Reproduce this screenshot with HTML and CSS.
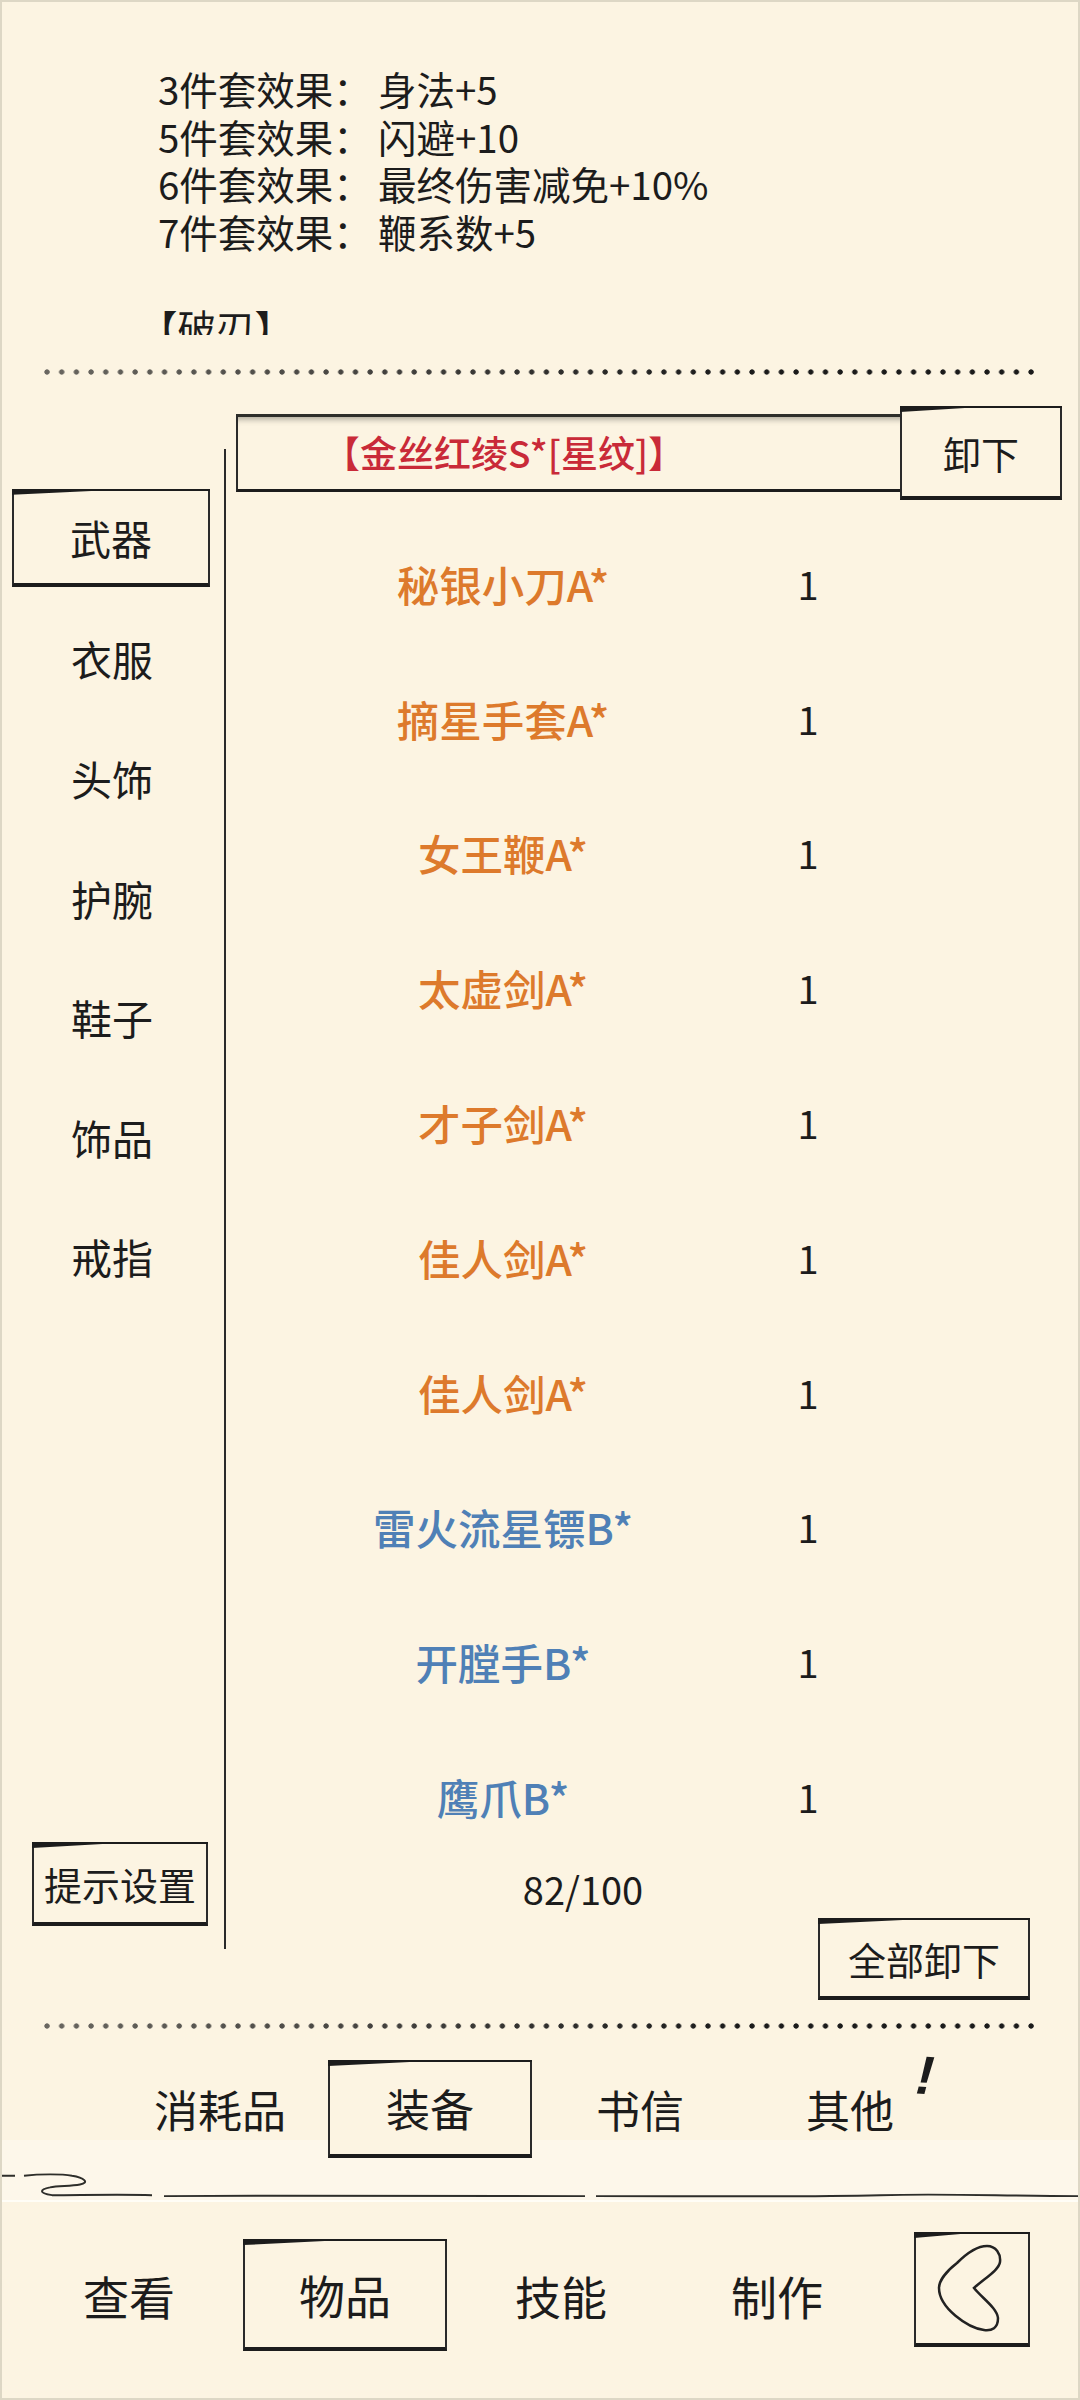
FILE: index.html
```html
<!DOCTYPE html>
<html lang="zh-CN">
<head>
    <meta charset="UTF-8">
    <meta name="viewport" content="width=device-width, initial-scale=1.0">
    <title>装备</title>
    <link rel="stylesheet" href="styles.css">
</head>
<body>
    <div class="page">
        <div class="set-info">
            <div><span class="set-label">3件套效果：</span>身法+5</div>
            <div><span class="set-label">5件套效果：</span>闪避+10</div>
            <div><span class="set-label">6件套效果：</span>最终伤害减免+10%</div>
            <div><span class="set-label">7件套效果：</span>鞭系数+5</div>
            <div>&nbsp;</div>
            <div class="set-name">【破刃】</div>
        </div>
        <div class="dots dots-top"></div>

        <div class="main">
            <div class="sidebar">
                <div class="categories">
                    <div class="category"><span class="sketch category-box">武器</span></div>
                    <div class="category">衣服</div>
                    <div class="category">头饰</div>
                    <div class="category">护腕</div>
                    <div class="category">鞋子</div>
                    <div class="category">饰品</div>
                    <div class="category">戒指</div>
                </div>
                <div class="sketch hint-btn">提示设置</div>
            </div>

            <div class="panel">
                <div class="equipped">
                    <div class="equipped-name">【金丝红绫S*[星纹]】</div>
                    <div class="sketch unequip-btn">卸下</div>
                </div>
                <div class="items">
                    <div class="item"><span class="item-name rank-a">秘银小刀A*</span><span class="item-count">1</span></div>
                    <div class="item"><span class="item-name rank-a">摘星手套A*</span><span class="item-count">1</span></div>
                    <div class="item"><span class="item-name rank-a">女王鞭A*</span><span class="item-count">1</span></div>
                    <div class="item"><span class="item-name rank-a">太虚剑A*</span><span class="item-count">1</span></div>
                    <div class="item"><span class="item-name rank-a">才子剑A*</span><span class="item-count">1</span></div>
                    <div class="item"><span class="item-name rank-a">佳人剑A*</span><span class="item-count">1</span></div>
                    <div class="item"><span class="item-name rank-a">佳人剑A*</span><span class="item-count">1</span></div>
                    <div class="item"><span class="item-name rank-b">雷火流星镖B*</span><span class="item-count">1</span></div>
                    <div class="item"><span class="item-name rank-b">开膛手B*</span><span class="item-count">1</span></div>
                    <div class="item"><span class="item-name rank-b">鹰爪B*</span><span class="item-count">1</span></div>
                </div>
                <div class="capacity">82/100</div>
                <div class="sketch unequip-all">全部卸下</div>
            </div>
        </div>

        <div class="dots dots-bottom"></div>

        <div class="tabs">
            <div class="tab">消耗品</div>
            <div class="tab sketch">装备</div>
            <div class="tab">书信</div>
            <div class="tab">其他<span class="alert">!</span></div>
        </div>

        <div class="band">
            <svg class="squiggle" viewBox="0 2140 1080 62" preserveAspectRatio="none">
                <path d="M0 2177 L15 2177 M24 2177 C40 2175 62 2175 72 2177 C84 2179 90 2184 80 2186 C70 2188 58 2187 50 2189 C40 2191 38 2195 52 2197 C80 2197 120 2196 152 2197 M164 2198 C300 2197 420 2198 585 2198 M596 2198 C700 2198 800 2199 880 2197 C950 2195 1000 2198 1080 2198" />
            </svg>
        </div>

        <div class="nav">
            <div class="nav-item">查看</div>
            <div class="nav-item sketch">物品</div>
            <div class="nav-item">技能</div>
            <div class="nav-item">制作</div>
            <div class="sketch back-btn">
                <svg class="back-icon" viewBox="914 2232 116 114">
                    <path d="M957 2263 C968 2252 978 2246 987 2246 C996 2246 1001 2254 1000 2262 C999 2270 985 2278 974 2288 C982 2298 997 2308 998 2318 C998 2328 992 2331 984 2330 C968 2328 939 2308 939 2288 C939 2280 948 2270 957 2263 Z" />
                </svg>
            </div>
        </div>
    </div>
</body>
</html>
```

FILE: styles.css
```css
* {
    box-sizing: border-box;
}

body {
    margin: 0;
    background-color: #fcf4e2;
    color: #1c1c1c;
    font-family: 'Noto Sans CJK SC', 'Noto Sans', sans-serif;
}

.page {
    width: 1080px;
    height: 2400px;
    overflow: hidden;
    display: flex;
    flex-direction: column;
    outline: 2px solid #ddd7c5;
    outline-offset: -2px;
}

/* hand drawn box: thin sides, heavy bottom, wedge along the top */
.sketch {
    position: relative;
    display: flex;
    align-items: center;
    justify-content: center;
    border: 2px solid #2a2a2a;
    border-bottom: 4px solid #1c1c1c;
    background-color: #fcf4e2;
}

.sketch::before {
    content: '';
    position: absolute;
    top: -2px;
    left: -2px;
    right: -2px;
    height: 6px;
    background-color: #1c1c1c;
    clip-path: polygon(0 0, 100% 0, 100% 35%, 40% 35%, 0 100%);
}

.set-info {
    height: 335px;
    padding: 65px 0 0 158px;
    overflow: hidden;
    font-size: 38.5px;
    line-height: 47.6px;
    flex: none;
}

.set-label {
    display: inline-block;
    width: 220px;
}

.set-name {
    margin-left: -19px;
}

/* dots get heavier towards the right */
.dots {
    flex: none;
    height: 6px;
    margin: 0 44px;
    background-image: radial-gradient(circle at 3px 3px, #1a1a1a 2.3px, transparent 3px);
    background-size: 14.7px 6px;
    -webkit-mask-image: linear-gradient(to right, rgba(0, 0, 0, 0.65), #000 70%);
    mask-image: linear-gradient(to right, rgba(0, 0, 0, 0.65), #000 70%);
}

.dots-top {
    margin-top: 34px;
    margin-bottom: 30px;
}

.main {
    flex: none;
    height: 1618px;
    display: flex;
}

.sidebar {
    flex: none;
    width: 226px;
    height: 1500px;
    margin-top: 44px;
    border-right: 2px solid #2a2a2a;
    display: flex;
    flex-direction: column;
    justify-content: space-between;
}

.categories {
    margin-top: 30px;
}

.category {
    height: 119.6px;
    display: flex;
    align-items: center;
    justify-content: center;
    font-size: 41px;
}

.category-box {
    width: 198px;
    height: 98px;
    margin-left: -2px;
    margin-top: -2px;
}

.hint-btn {
    width: 176px;
    height: 84px;
    margin: 0 0 23px 32px;
    font-size: 38px;
}

.panel {
    flex: 1;
    padding: 1px 18px 0 10px;
    display: flex;
    flex-direction: column;
}

.equipped {
    display: flex;
    align-items: center;
    height: 94px;
}

.equipped-name {
    flex: 1;
    height: 78px;
    margin-right: -2px;
    padding-left: 85px;
    border-left: 2px solid #2a2a2a;
    border-top: 3px solid #2e2e2a;
    border-bottom: 3px solid #1c1c1c;
    box-shadow: inset 0 7px 6px -5px rgba(60, 60, 50, 0.45);
    color: #c92a38;
    font-size: 37px;
    font-weight: 500;
    line-height: 70px;
}

.unequip-btn {
    flex: none;
    width: 162px;
    height: 94px;
    font-size: 38px;
}

.items {
    margin-top: 16px;
    height: 1348px;
}

.item {
    height: 134.8px;
    display: flex;
    align-items: center;
    font-size: 42.5px;
    font-weight: 500;
}

.item-name {
    width: 534px;
    text-align: center;
}

.item-count {
    font-size: 38px;
    font-weight: 400;
    width: 48px;
    margin-left: 14px;
    text-align: center;
}

.rank-a {
    color: #dd7a2c;
}

.rank-b {
    color: #4f80b6;
}

.capacity {
    height: 54px;
    width: 694px;
    text-align: center;
    font-size: 38px;
    line-height: 50px;
}

.unequip-all {
    align-self: flex-end;
    width: 212px;
    height: 82px;
    margin-right: 32px;
    font-size: 38px;
}

.dots-bottom {
    margin-top: 0;
}

.tabs {
    position: relative;
    z-index: 1;
    flex: none;
    height: 111px;
    padding: 31px 0 0 118px;
    display: flex;
    gap: 6px;
}

.tab {
    position: relative;
    width: 204px;
    height: 98px;
    display: flex;
    align-items: center;
    justify-content: center;
    font-size: 44px;
}

.alert {
    position: absolute;
    top: -15px;
    left: 168px;
    font-family: 'Liberation Sans', sans-serif;
    font-size: 54px;
    font-weight: 700;
    font-style: italic;
    line-height: 60px;
    transform: rotate(4deg);
}

.band {
    flex: none;
    height: 62px;
    background-color: #fdf7ea;
    border-bottom: 2px solid #fffdf6;
}

.squiggle {
    display: block;
    width: 1080px;
    height: 60px;
}

.squiggle path {
    fill: none;
    stroke: #2e2e2a;
    stroke-width: 2;
}

.nav {
    flex: none;
    display: flex;
    gap: 12px;
    padding: 37px 50px 0 27px;
}

.nav-item {
    width: 204px;
    height: 112px;
    display: flex;
    align-items: center;
    justify-content: center;
    font-size: 46px;
}

.back-btn {
    width: 116px;
    height: 115px;
    margin: -7px 0 0 auto;
}

.back-icon {
    width: 116px;
    height: 114px;
    flex: none;
}

.back-icon path {
    fill: none;
    stroke: #222;
    stroke-width: 2.5;
}
```
